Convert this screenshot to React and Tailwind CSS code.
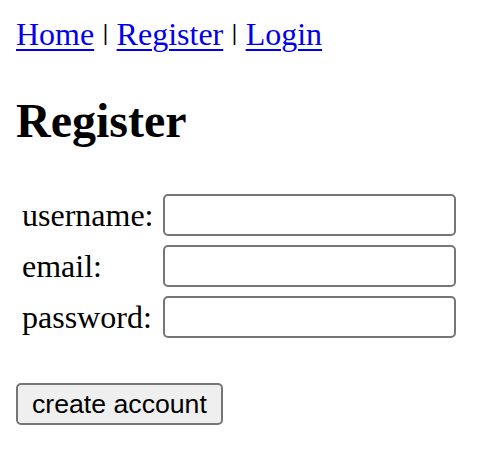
import React, { useState } from "react";

const App = () => {
  const [form, setForm] = useState({ username: "", email: "", password: "" });

  const update = (key) => (e) => setForm({ ...form, [key]: e.target.value });

  const fields = [
    { key: "username", label: "username:", type: "text" },
    { key: "email", label: "email:", type: "email" },
    { key: "password", label: "password:", type: "password" },
  ];

  const Sep = () => <span className="inline-block -translate-y-[2px] scale-y-[0.71]">|</span>;

  return (
    <div className="min-h-screen bg-white p-4 font-['Liberation_Serif',serif] text-[32px] leading-[37px] text-black">
      {/* Nav */}
      <nav>
        <a href="#" className="text-[#0000ee] underline decoration-2 underline-offset-[4px]">Home</a>
        {" "}<Sep />{" "}
        <a href="#" className="text-[#0000ee] underline decoration-2 underline-offset-[4px]">Register</a>
        {" "}<Sep />{" "}
        <a href="#" className="text-[#0000ee] underline decoration-2 underline-offset-[4px]">Login</a>
      </nav>

      <h2 className="mt-[40px] mb-[40px] text-[48px] font-bold leading-[55px]">Register</h2>

      {/* Form */}
      <form onSubmit={(e) => e.preventDefault()}>
        <div className="grid grid-cols-[133px_293px] items-center gap-x-[8px] gap-y-[9px] pl-[6px] pt-[6px]">
          {fields.map((f) => (
            <React.Fragment key={f.key}>
              <label htmlFor={f.key}>{f.label}</label>
              <input
                id={f.key}
                type={f.type}
                value={form[f.key]}
                onChange={update(f.key)}
                className="h-[42px] w-[293px] rounded-[5px] border-2 border-[#767676] bg-white px-2 font-['Liberation_Sans',sans-serif] text-[26px] outline-none"
              />
            </React.Fragment>
          ))}
        </div>

        <button
          type="submit"
          className="mt-[45px] h-[42px] rounded-[5px] border-2 border-[#767676] bg-[#efefef] px-[14px] font-['Liberation_Sans',sans-serif] text-[26.67px] leading-none text-black"
        >
          create account
        </button>
      </form>
    </div>
  );
};

export default App;
